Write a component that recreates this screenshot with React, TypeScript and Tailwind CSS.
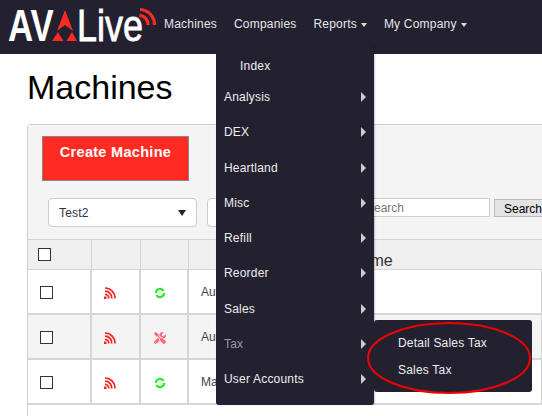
import { FaTools } from "react-icons/fa";

const font = "font-['Liberation_Sans',Arial,sans-serif]";

const reportItems = ["Analysis", "DEX", "Heartland", "Misc", "Refill", "Reorder", "Sales", "Tax", "User Accounts"];

const rows = [
  { name: "Auto", status: "ok", bg: "bg-white" },
  { name: "Auto", status: "repair", bg: "bg-[#f4f4f4]" },
  { name: "Main", status: "ok", bg: "bg-white" },
];

function Logo() {
  return (
    <svg width="158" height="46" viewBox="0 1 158 46" className="-mr-[11px] shrink-0 overflow-visible">
      <text transform="translate(8 41) scale(0.79 1)" fontFamily="Liberation Sans" fontSize="44" fontWeight="700" fill="#fff">
        AV
      </text>
      <polygon points="65,10 73,31 65,25 57,31" fill="#ff2a22" />
      <polygon points="58,32 63.5,41 52,41" fill="#ff2a22" />
      <polygon points="72,32 77,41 66.5,41" fill="#ff2a22" />
      <text transform="translate(77 41) scale(0.818 1)" fontFamily="Liberation Sans" fontSize="44" stroke="#fff" strokeWidth="0.8" fill="#fff">
        Live
      </text>
      <g fill="none" stroke="#ff2a22" strokeWidth="3.2">
        <path d="M140 9.5a15 15 0 0 1 14.5 15.5" />
        <path d="M139.5 15.5a9 9 0 0 1 8.5 9.5" />
      </g>
    </svg>
  );
}

function Caret() {
  return <span className="ml-1 inline-block h-0 w-0 border-x-[3.5px] border-t-[4px] border-x-transparent border-t-[#ddd] align-middle" />;
}

function NavLink({ label, caret }: { label: string; caret?: boolean }) {
  return (
    <a className="text-[12px] tracking-[0.2px] text-[#e6e6e6]">
      {label}
      {caret && <Caret />}
    </a>
  );
}

function Feed() {
  return (
    <svg width="12" height="12" viewBox="0 0 12 12" fill="none" stroke="#ff1f1f" strokeWidth="1.7">
      <path d="M1 1a10 10 0 0 1 10 10.5" />
      <path d="M1 4.2a6.8 6.8 0 0 1 6.8 7.3" />
      <path d="M1 7.3a3.7 3.7 0 0 1 3.7 4.2" />
      <rect x="0" y="9.5" width="2.5" height="2.5" fill="#ff1f1f" stroke="none" />
    </svg>
  );
}

function Ring() {
  return (
    <svg width="12" height="12" viewBox="0 0 12 12" fill="none" stroke="#22ee22" strokeWidth="2.2">
      <path d="M1.9 6A4.1 4.1 0 0 1 9.6 4" />
      <path d="M10.1 6A4.1 4.1 0 0 1 2.4 8" />
    </svg>
  );
}

function Checkbox() {
  return <span className="block h-[13px] w-[13px] border-[1.5px] border-[#333] bg-white" />;
}

export default function App() {
  return (
    <div className={`relative h-[416px] w-[542px] overflow-hidden bg-white ${font}`}>
      <nav className="flex h-[54px] items-center gap-[17px] bg-[#232130] pb-[6px]">
        <Logo />
        <NavLink label="Machines" />
        <NavLink label="Companies" />
        <NavLink label="Reports" caret />
        <NavLink label="My Company" caret />
      </nav>

      <main className="pl-[27px]">
        <h1 className="mt-[10px] h-[60px] text-[34px] leading-[46px] text-black">Machines</h1>

        <section className="h-[300px] rounded-tl border-l border-t border-[#ccc]">
          <div className="h-[114px] bg-[#f4f4f4] pl-[14px] pt-[11px]">
            <button className="flex h-[45px] w-[147px] items-start justify-center border border-[#888] bg-[#ff2a22] pt-[5px] text-[14.5px] font-bold tracking-[0.3px] text-white">
              Create Machine
            </button>
            <div className="mt-[17px] flex items-start pl-[6px]">
              <div className="flex h-[29px] w-[149px] shrink-0 items-center justify-between rounded border border-[#ccc] bg-white pl-[10px] pr-[10px] text-[12px] tracking-[0.2px] text-[#333344]">
                Test2
                <span className="h-0 w-0 border-x-[4px] border-t-[6px] border-x-transparent border-t-[#223]" />
              </div>
              <div className="ml-[10px] h-[29px] w-[80px] shrink-0 rounded border border-[#ccc] bg-white" />
              <input
                placeholder="Search"
                className="ml-[8px] h-[19px] w-[195px] shrink-0 border border-[#ccc] bg-white pl-[70px] text-[12px] placeholder:text-[#777]"
              />
              <button className="ml-[4px] mt-[1px] h-[18px] w-[60px] shrink-0 border border-[#bbb] bg-[#e3e3e3] pl-[9px] text-left text-[12px] text-black">
                Search
              </button>
            </div>
          </div>

          <div className="flex h-[31px] w-[514px] border-y border-[#d4d4d4] bg-[#efefef]">
            <div className="flex w-[64px] items-center border-r border-[#d4d4d4] pl-[10px]">
              <Checkbox />
            </div>
            <div className="w-[49px] border-r border-[#d4d4d4]" />
            <div className="w-[48px] border-r border-[#d4d4d4]" />
            <div className="flex-1 pl-[161px] pt-[11px] text-[16px] leading-5 text-[#333]">Name</div>
          </div>

          {rows.map((row, i) => (
            <div key={i} className={`flex h-[45px] w-[514px] border-b-2 border-r border-[#d6d6d6] ${row.bg}`}>
              <div className="flex w-[64px] items-center border-r-2 border-[#d6d6d6] pl-[12px] pt-[1px]">
                <Checkbox />
              </div>
              <div className="flex w-[49px] items-center border-r-2 border-[#d6d6d6] pl-[12px] pt-[2px]">
                <Feed />
              </div>
              <div className="flex w-[48px] items-center border-r-2 border-[#d6d6d6] pl-[13px] pt-[2px]">
                {row.status === "ok" ? <Ring /> : <FaTools className="text-[12px] text-[#ff6478]" />}
              </div>
              <div className="flex flex-1 items-center pl-[12px] text-[12px] text-[#444]">{row.name}</div>
            </div>
          ))}
        </section>
      </main>

      <div className="absolute left-[216px] top-[45px] h-[360px] w-[158px] rounded-[3px] bg-[#232130] text-[12px] tracking-[0.2px] text-[#eee] shadow-[1px_0_2px_rgba(0,0,0,0.2)]">
        <div className="flex h-[35px] items-end pb-[5px] pl-[24px]">Index</div>
        {reportItems.map((item) => (
          <div key={item} className={`flex h-[35.25px] items-center justify-between px-[8px] pb-[1px] ${item === "Tax" ? "text-[#9a9aa5]" : ""}`}>
            {item}
            <span className="h-0 w-0 border-y-[5px] border-l-[5px] border-y-transparent border-l-[#ccc]" />
          </div>
        ))}
      </div>

      <div className="absolute left-[374px] top-[320px] flex h-[72px] w-[158px] flex-col gap-[10px] rounded-[3px] bg-[#232130] pl-[24px] pt-[15px] text-[12px] tracking-[0.2px] text-[#eee]">
        <a className="leading-[17px]">Detail Sales Tax</a>
        <a className="leading-[17px]">Sales Tax</a>
      </div>

      <svg width="166" height="74" viewBox="0 0 166 74" className="absolute left-[366px] top-[321px]">
        <ellipse cx="83" cy="37" rx="81" ry="35" fill="none" stroke="#f00000" strokeWidth="2" />
      </svg>
    </div>
  );
}
